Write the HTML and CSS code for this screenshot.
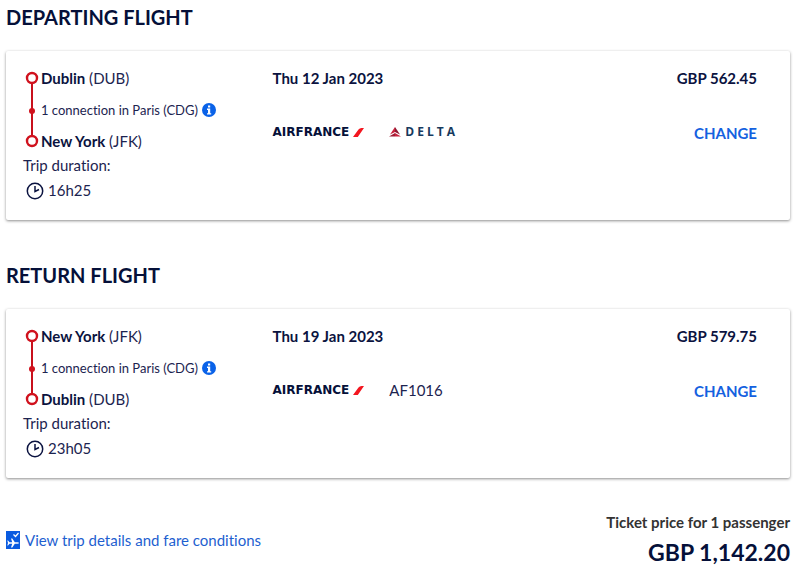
FILE: index.html
```html
<!DOCTYPE html>
<html lang="en">
<head>
    <meta charset="UTF-8">
    <meta name="viewport" content="width=device-width, initial-scale=1.0">
    <title>Your flights</title>
    <link rel="stylesheet" href="styles.css">
</head>
<body>
    <main class="summary">
        <section class="flight">
            <h2>DEPARTING FLIGHT</h2>
            <div class="card">
                <div class="trip">
                    <div class="route">
                        <svg class="track" viewBox="0 0 16 87" aria-hidden="true">
                            <path d="M8 12V75" stroke="#c8101c" stroke-width="2"/>
                            <circle cx="8" cy="12" r="5" fill="#fff" stroke="#d0111d" stroke-width="2.4"/>
                            <circle cx="8" cy="45" r="3" fill="#d0111d"/>
                            <circle cx="8" cy="75" r="5" fill="#fff" stroke="#d0111d" stroke-width="2.4"/>
                        </svg>
                        <div class="stops">
                            <p><strong>Dublin</strong> (DUB)</p>
                            <p class="connection">1 connection in Paris (CDG)
                                <button class="info-btn" aria-label="Connection details">
                                    <svg viewBox="0 0 14 14"><circle cx="7" cy="7" r="7" fill="#0a62e8"/><path d="M6 2.5h2.2v2H6zM5 5.6h3.2v4.6h1v1.3H5v-1.3h1V6.900H5z" fill="#fff"/></svg>
                                </button>
                            </p>
                            <p><strong>New York</strong> (JFK)</p>
                        </div>
                    </div>
                    <p class="duration-label">Trip duration:</p>
                    <p class="duration">
                        <svg class="clock" viewBox="0 0 18 18" fill="none" stroke="#0b1340" stroke-width="1.5"><circle cx="9" cy="9" r="7.700"/><path d="M9 4v5.500l4-2"/></svg>
                        16h25
                    </p>
                </div>
                <div class="details">
                    <p class="date">Thu 12 Jan 2023</p>
                    <div class="airlines">
                        <span class="airfrance">AIRFRANCE
                            <svg viewBox="0 0 11 9"><path d="M0 9 5.500 1.500Q6.600 0 8.500 0H11L4.800 9z" fill="#f3161f"/></svg>
                        </span>
                        <span class="delta">
                            <svg viewBox="0 0 12 10"><path d="M6 0v5L1 7.500z" fill="#c8203c"/><path d="M6 0v5l5 2.500z" fill="#8c1730"/><path d="M6 6 0 9.500h6z" fill="#9d1b34"/><path d="m6 6 6 3.500H6z" fill="#c8203c"/></svg>
                            DELTA
                        </span>
                    </div>
                </div>
                <div class="fare">
                    <p class="price">GBP 562.45</p>
                    <button class="change-btn">CHANGE</button>
                </div>
            </div>
        </section>

        <section class="flight">
            <h2>RETURN FLIGHT</h2>
            <div class="card">
                <div class="trip">
                    <div class="route">
                        <svg class="track" viewBox="0 0 16 87" aria-hidden="true">
                            <path d="M8 12V75" stroke="#c8101c" stroke-width="2"/>
                            <circle cx="8" cy="12" r="5" fill="#fff" stroke="#d0111d" stroke-width="2.4"/>
                            <circle cx="8" cy="45" r="3" fill="#d0111d"/>
                            <circle cx="8" cy="75" r="5" fill="#fff" stroke="#d0111d" stroke-width="2.4"/>
                        </svg>
                        <div class="stops">
                            <p><strong>New York</strong> (JFK)</p>
                            <p class="connection">1 connection in Paris (CDG)
                                <button class="info-btn" aria-label="Connection details">
                                    <svg viewBox="0 0 14 14"><circle cx="7" cy="7" r="7" fill="#0a62e8"/><path d="M6 2.5h2.2v2H6zM5 5.6h3.2v4.6h1v1.3H5v-1.3h1V6.900H5z" fill="#fff"/></svg>
                                </button>
                            </p>
                            <p><strong>Dublin</strong> (DUB)</p>
                        </div>
                    </div>
                    <p class="duration-label">Trip duration:</p>
                    <p class="duration">
                        <svg class="clock" viewBox="0 0 18 18" fill="none" stroke="#0b1340" stroke-width="1.5"><circle cx="9" cy="9" r="7.700"/><path d="M9 4v5.500l4-2"/></svg>
                        23h05
                    </p>
                </div>
                <div class="details">
                    <p class="date">Thu 19 Jan 2023</p>
                    <div class="airlines">
                        <span class="airfrance">AIRFRANCE
                            <svg viewBox="0 0 11 9"><path d="M0 9 5.500 1.500Q6.600 0 8.500 0H11L4.800 9z" fill="#f3161f"/></svg>
                        </span>
                        <span>AF1016</span>
                    </div>
                </div>
                <div class="fare">
                    <p class="price">GBP 579.75</p>
                    <button class="change-btn">CHANGE</button>
                </div>
            </div>
        </section>

        <footer class="total">
            <a class="conditions" href="#">
                <svg viewBox="0 0 14 18"><path d="M0 0h14v18H0z" fill="#0a5be0"/><path d="m7.500 3.500 2 2 3-3.500" fill="none" stroke="#fff" stroke-width="1.2"/><path d="M2 9.500l1.500 1.700h2.700L5 7.500h1.300l2.500 3.700h2.700q1.500 0 1.500.8t-1.500.8H8.800l-2.500 3.700H5l1.200-3.700H3.500L2 14.500h-.7L2 12l-.7-2.500z" fill="#fff"/></svg>
                View trip details and fare conditions
            </a>
            <div class="total-price">
                <p class="total-label">Ticket price for 1 passenger</p>
                <p class="amount">GBP 1,142.20</p>
            </div>
        </footer>
    </main>
</body>
</html>
```
FILE: styles.css
```css
* {
    box-sizing: border-box;
}

body {
    margin: 0;
    background: #fff;
    color: #1c2450;
    font-family: Lato, sans-serif;
    font-size: 15px;
    line-height: 24px;
    font-variant-ligatures: none;
}

h2,
p {
    margin: 0;
}

svg {
    display: block;
    flex-shrink: 0;
}

button {
    padding: 0;
    border: none;
    background: none;
    font: inherit;
    cursor: pointer;
}

.summary {
    padding: 6px 10px 0 6px;
}

.flight + .flight {
    margin-top: 44px;
}

.flight h2 {
    margin-bottom: 23px;
    font-size: 20px;
    line-height: 22px;
    color: #051039;
}

.card {
    display: grid;
    grid-template-columns: 34% 1fr auto;
    padding: 15px 33px 17px 17px;
    border-radius: 2px;
    box-shadow: 0 1px 3px rgba(0, 0, 0, 0.45);
}

.card strong,
.date,
.price {
    color: #0b1340;
    font-weight: bold;
}

.route {
    display: flex;
    gap: 1px;
    margin-left: 1px;
}

.track {
    width: 16px;
    height: 87px;
}

.connection {
    display: flex;
    align-items: center;
    gap: 4px;
    height: 39px;
    font-size: 13px;
}

.info-btn svg {
    width: 14px;
    height: 14px;
}

.duration-label,
.duration {
    line-height: 25px;
}

.duration {
    display: flex;
    align-items: center;
    gap: 4px;
    margin-left: 3px;
}

.clock {
    width: 18px;
    height: 18px;
}

.airlines {
    display: flex;
    align-items: center;
    gap: 25px;
    margin-top: 30px;
}

.airfrance {
    display: flex;
    align-items: center;
    gap: 4px;
    color: #051039;
    font-family: "DejaVu Sans", sans-serif;
    font-size: 12px;
    font-weight: bold;
}

.airfrance svg {
    width: 11px;
    height: 9px;
}

.delta {
    display: flex;
    align-items: center;
    gap: 4px;
    color: #173a5e;
    font-family: "Open Sans", sans-serif;
    font-size: 12px;
    font-weight: bold;
    letter-spacing: 3px;
}

.delta svg {
    width: 12px;
    height: 10px;
}

.fare {
    display: flex;
    flex-direction: column;
    align-items: flex-end;
    gap: 31px;
}

.change-btn {
    color: #1461e0;
    font-weight: bold;
}

.total {
    display: flex;
    justify-content: space-between;
    align-items: center;
    margin-top: 32px;
}

.conditions {
    display: flex;
    align-items: center;
    gap: 5px;
    color: #1e5fd0;
    text-decoration: none;
}

.conditions svg {
    width: 14px;
    height: 18px;
}

.total-price {
    text-align: right;
    font-weight: bold;
}

.total-label {
    color: #333;
}

.amount {
    font-size: 23px;
    line-height: 36px;
    color: #051039;
}
```
